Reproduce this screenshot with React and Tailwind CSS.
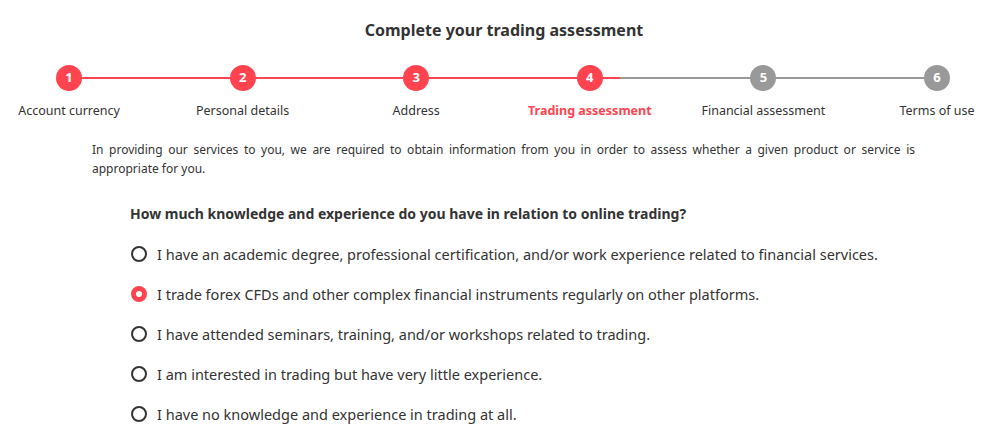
import React from "react";

const steps = [
  { n: 1, label: "Account currency", state: "done" },
  { n: 2, label: "Personal details", state: "done" },
  { n: 3, label: "Address", state: "done" },
  { n: 4, label: "Trading assessment", state: "active" },
  { n: 5, label: "Financial assessment", state: "todo" },
  { n: 6, label: "Terms of use", state: "todo" },
];

const options = [
  "I have an academic degree, professional certification, and/or work experience related to financial services.",
  "I trade forex CFDs and other complex financial instruments regularly on other platforms.",
  "I have attended seminars, training, and/or workshops related to trading.",
  "I am interested in trading but have very little experience.",
  "I have no knowledge and experience in trading at all.",
];

export default function App() {
  return (
    <div
      className="w-[1000px] h-[438px] bg-white overflow-hidden text-[#333333]"
      style={{ fontFamily: '"Noto Sans", "Open Sans", sans-serif' }}
    >
      <h1 className="pt-[20px] text-center text-[16px] leading-[20px] font-bold text-[#333333] pl-[8px]">
        Complete your trading assessment
      </h1>

      <div className="relative mt-[25px] flex justify-between pl-[9px] pr-[3px]">
        <div className="absolute left-[69px] top-[12px] h-[2px] w-[868px] bg-[#999999]" />
        <div className="absolute left-[69px] top-[12px] h-[2px] w-[551px] bg-[#ff444f]" />
        {steps.map((s) => (
          <div key={s.n} className="relative flex w-[120px] flex-col items-center">
            <div
              className={
                "flex h-[26px] w-[26px] items-center justify-center rounded-full text-[13px] font-bold text-white " +
                (s.state === "todo" ? "bg-[#999999]" : "bg-[#ff444f]")
              }
            >
              {s.n}
            </div>
            <div
              className={
                "mt-[11px] whitespace-nowrap text-[12.5px] leading-[18px] " +
                (s.state === "active" ? "font-bold text-[#ff444f]" : "text-[#333333]")
              }
            >
              {s.label}
            </div>
          </div>
        ))}
      </div>

      <p className="ml-[92px] mt-[20px] w-[823px] text-justify text-[12px] leading-[19px] text-[#333333]">
        In providing our services to you, we are required to obtain information from you in order to assess whether a given product or service is appropriate for you.
      </p>

      <div className="ml-[130px] mt-[26px] text-[14px] leading-[20px] font-bold text-[#333333]">
        How much knowledge and experience do you have in relation to online trading?
      </div>

      <div className="ml-[131px] mt-[10px] flex flex-col">
        {options.map((o, i) => (
          <div key={i} className="flex h-[40px] items-center gap-[10px]">
            {i === 1 ? (
              <span className="h-[16px] w-[16px] shrink-0 rounded-full border-[5px] border-[#ff444f] bg-white" />
            ) : (
              <span className="h-[16px] w-[16px] shrink-0 rounded-full border-2 border-[#333333] bg-white" />
            )}
            <span className="text-[14.5px] leading-[20px] text-[#333333]">{o}</span>
          </div>
        ))}
      </div>
    </div>
  );
}
